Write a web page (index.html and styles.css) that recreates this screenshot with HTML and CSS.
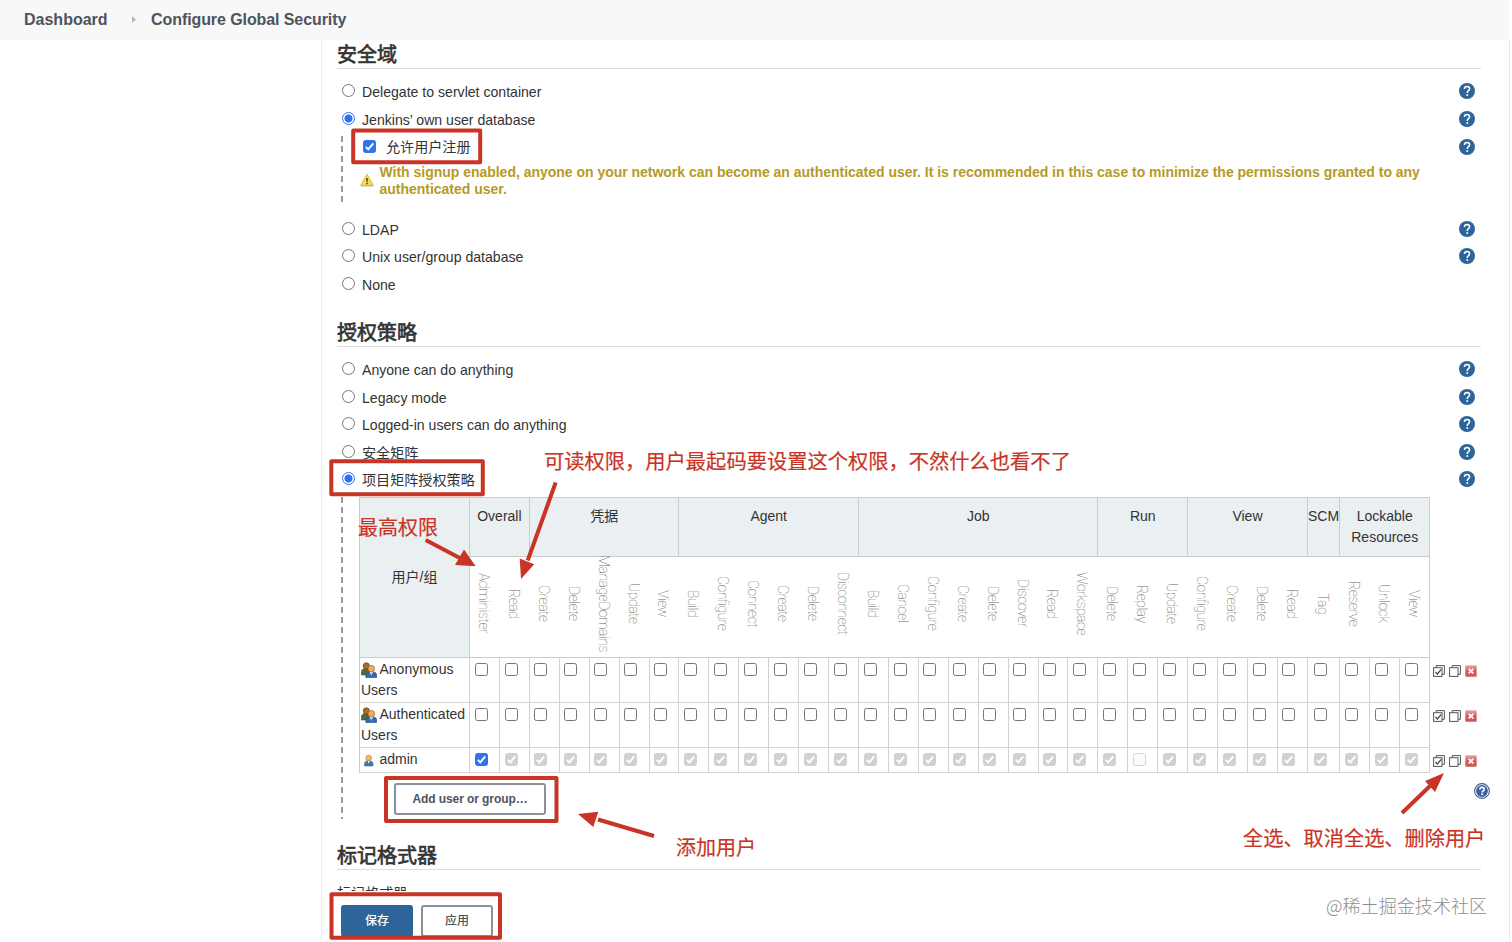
FILE: index.html
```html
<!DOCTYPE html>
<html lang="zh-CN">
<head>
<meta charset="utf-8">
<title>Configure Global Security</title>
<link rel="stylesheet" href="styles.css">
</head>
<body>
<svg class="defs" width="0" height="0" aria-hidden="true">
  <symbol id="help" viewBox="0 0 16 16">
    <circle cx="8" cy="8" r="8" fill="#2d659b"/>
    <path d="M5.400 6.100c0-1.700 1.100-2.700 2.600-2.700s2.600 1 2.600 2.400c0 1.900-2.400 1.900-2.400 4.100" fill="none" stroke="#fff" stroke-width="1.500"/>
    <rect x="7.400" y="11.200" width="1.700" height="1.700" fill="#fff"/>
  </symbol>
  <symbol id="help-ring" viewBox="0 0 16 16">
    <circle cx="8" cy="8" r="7.400" fill="#fff" stroke="#3c5a96" stroke-width="1.100"/>
    <circle cx="8" cy="8" r="5.900" fill="#3b5fa0"/>
    <path d="M5.900 6.400c0-1.400.9-2.100 2.100-2.100s2.200.7 2.200 1.900c0 1.600-2 1.600-2 3.200" fill="none" stroke="#fff" stroke-width="1.700"/>
    <rect x="7.300" y="10.400" width="1.800" height="1.700" fill="#fff"/>
  </symbol>
  <symbol id="tick" viewBox="0 0 13 13">
    <path d="M2.800 6.900l2.500 2.500 4.900-6" fill="none" stroke="#fff" stroke-width="1.900"/>
  </symbol>
  <symbol id="warn" viewBox="0 0 14 14">
    <path d="M7 1.200L13.300 12.400H.7z" fill="#f4dd52" stroke="#cdb52f" stroke-width=".9" stroke-linejoin="round"/>
    <path d="M1 13h12.400" stroke="#b9ad80" stroke-width=".8"/>
    <path d="M7 5v3.800M7 9.800v1.400" stroke="#4c4310" stroke-width="1.500"/>
  </symbol>
  <symbol id="people" viewBox="0 0 16 16">
    <path d="M.5 13V9.500c0-2 2-3 4.500-3s4 1 4 3V13z" fill="#55693a" stroke="#39492a" stroke-width=".6"/>
    <circle cx="5.300" cy="3.900" r="3.100" fill="#a76e2b" stroke="#654019" stroke-width=".7"/>
    <path d="M4.800 15.600v-2.800c0-2 2-3 5.400-3s5.400 1 5.400 3v2.800z" fill="#2f6bb4" stroke="#1d4479" stroke-width=".6"/>
    <path d="M8.600 9.900l1.700 3.600 1.800-3.600z" fill="#fff"/>
    <path d="M10.300 11v3" stroke="#8899b5" stroke-width=".8"/>
    <circle cx="10.300" cy="6.700" r="3.300" fill="#f0ae58" stroke="#a0601d" stroke-width=".7"/>
  </symbol>
  <symbol id="person" viewBox="0 0 16 16">
    <path d="M3.500 14v-2.300c0-2 1.700-3 4.200-3s4.300 1 4.300 3V14z" fill="#3a79b4" stroke="#28578a" stroke-width=".5"/>
    <path d="M6.500 8.700l1.200 2.800L9 8.700z" fill="#fff"/>
    <circle cx="7.700" cy="6" r="2.800" fill="#efb768" stroke="#b97b34" stroke-width=".6"/>
  </symbol>
  <symbol id="stack" viewBox="0 0 12 12">
    <path d="M3.200 2.700V.6h8.200v8.700H9" fill="none" stroke="#555" stroke-width="1"/>
    <rect x=".6" y="2.700" width="8.400" height="8.700" fill="#fff" stroke="#555" stroke-width="1"/>
  </symbol>
  <symbol id="stack-check" viewBox="0 0 12 12">
    <use href="#stack"/>
    <path d="M2.500 6.800l1.900 2.200 3.800-4.600" fill="none" stroke="#444" stroke-width="1.200"/>
  </symbol>
  <symbol id="remove" viewBox="0 0 12 12">
    <linearGradient id="remove-fill" x1="0" y1="0" x2="0" y2="1"><stop offset="0" stop-color="#eaa6a3"/><stop offset=".5" stop-color="#d35b59"/><stop offset="1" stop-color="#cf5557"/></linearGradient>
    <rect x=".3" y=".3" width="11.400" height="11.400" rx=".8" fill="url(#remove-fill)"/>
    <path d="M3.700 3.800l4.600 4.600M8.300 3.800L3.700 8.400" stroke="#fff" stroke-width="1.800"/>
  </symbol>
</svg>

<header class="breadcrumbs">
  <span>Dashboard</span>
  <svg class="crumb-arrow" viewBox="0 0 5 8"><path d="M0 0l5 4-5 4z" fill="#b2b2b2"/></svg>
  <span class="current">Configure Global Security</span>
</header>

<div class="page">
  <aside class="side"></aside>
  <main class="content">
    <h2 class="title">安全域</h2>
    <div class="options">
      <div class="option"><i class="radio"></i><span>Delegate to servlet container</span><svg class="help"><use href="#help"/></svg></div>
      <div class="option"><i class="radio on"></i><span>Jenkins’ own user database</span><svg class="help"><use href="#help"/></svg></div>
    </div>
    <div class="nested signup">
      <div class="signup-row"><i class="check on"><svg><use href="#tick"/></svg></i><span>允许用户注册</span><svg class="help"><use href="#help"/></svg></div>
      <div class="warning"><svg class="warn-icon"><use href="#warn"/></svg><p>With signup enabled, anyone on your network can become an authenticated user. It is recommended in this case to minimize the permissions granted to any<br>authenticated user.</p></div>
    </div>
    <div class="options after-signup">
      <div class="option"><i class="radio"></i><span>LDAP</span><svg class="help"><use href="#help"/></svg></div>
      <div class="option"><i class="radio"></i><span>Unix user/group database</span><svg class="help"><use href="#help"/></svg></div>
      <div class="option"><i class="radio"></i><span>None</span></div>
    </div>

    <h2 class="title title-auth">授权策略</h2>
    <div class="options strategies">
      <div class="option"><i class="radio"></i><span>Anyone can do anything</span><svg class="help"><use href="#help"/></svg></div>
      <div class="option"><i class="radio"></i><span>Legacy mode</span><svg class="help"><use href="#help"/></svg></div>
      <div class="option"><i class="radio"></i><span>Logged-in users can do anything</span><svg class="help"><use href="#help"/></svg></div>
      <div class="option"><i class="radio"></i><span>安全矩阵</span><svg class="help"><use href="#help"/></svg></div>
      <div class="option"><i class="radio on"></i><span>项目矩阵授权策略</span><svg class="help"><use href="#help"/></svg></div>
    </div>
    <div class="nested strategy">
      <div class="matrix" id="matrix"></div>
      <div class="add-row">
        <button class="button add">Add user or group…</button>
        <svg class="help ring"><use href="#help-ring"/></svg>
      </div>
    </div>

    <h2 class="title title-format">标记格式器</h2>
    <div class="format-label">标记格式器</div>
    <div class="bottom-bar">
      <button class="button primary">保存</button>
      <button class="button">应用</button>
    </div>
  </main>
</div>

<svg class="marks" width="1512" height="942" viewBox="0 0 1512 942">
  <g fill="none" stroke="#c93426" stroke-width="4" stroke-linejoin="round">
    <rect x="353.200" y="130.500" width="127" height="31.700"/>
    <rect x="331.300" y="461.200" width="151.500" height="33"/>
    <rect x="386" y="778" width="170.500" height="43"/>
    <rect x="331.500" y="894.300" width="168.500" height="43.400"/>
    <path d="M425.700 540l36 19M555.700 482.500l-28 78M654 836l-56-16.500M1402 813l28-27"/>
  </g>
  <g fill="#c93426">
    <path d="M475.700 566.300L455 565l9-15.500z"/>
    <path d="M521 579l-1.300-20.500 14.500 5.700z"/>
    <path d="M578 814l20.300-2.300-5 15.200z"/>
    <path d="M1444 773l-19 8 10 11z"/>
  </g>
</svg>
<div class="note note-read">可读权限，用户最起码要设置这个权限，不然什么也看不了</div>
<div class="note note-admin">最高权限</div>
<div class="note note-add">添加用户</div>
<div class="note note-actions">全选、取消全选、删除用户</div>
<div class="watermark">@稀土掘金技术社区</div>
<script src="matrix.js"></script>
</body>
</html>
```

FILE: styles.css
```css
* { box-sizing: border-box; }
body {
  margin: 0;
  width: 1512px;
  height: 942px;
  overflow: hidden;
  position: relative;
  background: #fff;
  color: #333;
  font: 14.1px/20px "Liberation Sans", "Noto Sans CJK SC", sans-serif;
}
.defs { position: absolute; }
.breadcrumbs {
  display: flex;
  align-items: center;
  height: 40px;
  width: 1509px;
  padding: 0 24px;
  background: #f8f8f8;
  color: #4d545d;
  font-size: 16px;
  font-weight: bold;
}
.current { letter-spacing: -.09px; }
.crumb-arrow { width: 4px; height: 7px; margin: 0 15px 2px 24.500px; }
.page { display: flex; height: 902px; width: 1510px; border-right: 1px solid #e8e8e8; }
.side { width: 321px; flex: none; }
.content {
  flex: 1;
  border-left: 1px solid #efefef;
  padding: 0 28px 0 15px;
  display: flex;
  flex-direction: column;
}
.title {
  flex: none;
  margin: 0 4px 0 0;
  height: 29px;
  padding-bottom: 1px;
  border-bottom: 1px solid #dcdcdc;
  font: 400 20px/27px "Noto Sans CJK SC", sans-serif;
  -webkit-text-stroke: .65px #333;
}
.title-auth { margin-top: 20px; }
.title-format { margin-top: 22px; }
.options { padding: 8.500px 10px 0 5px; }
.strategies { padding-top: 9px; }
.option { display: flex; align-items: center; height: 27.500px; }
.option span { margin-left: 7px; padding-top: 2px; }
.radio {
  width: 13px; height: 13px; flex: none;
  border: 1px solid #767676; border-radius: 50%;
  margin-top: -1px;
}
.radio.on { border-color: #2f73ef; background: radial-gradient(circle, #2f73ef 0 3.800px, #fff 4.300px); }
.help { width: 16px; height: 16px; margin-left: auto; flex: none; }
.check {
  display: block; flex: none;
  width: 13px; height: 13px;
  border: 1px solid #767676; border-radius: 2.500px;
}
.check svg { display: block; width: 13px; height: 13px; margin: -1px; }
.check.on { background: #2f73ef; border-color: #2f73ef; }
.check.locked { background: #d1d1d1; border-color: #d1d1d1; }
.check.blank { background: #fafafa; border-color: #d6d6d6; }
.nested {
  margin-left: 4px;
  background: repeating-linear-gradient(to bottom, #999 0 6px, transparent 6px 10px) left top / 2px 100% no-repeat;
}
.signup { height: 67px; margin-top: 3.500px; }
.signup-row { display: flex; align-items: center; height: 21px; padding: 0 10px 0 22px; }
.signup-row span { margin-left: 10px; }
.warning {
  display: flex;
  padding: 7px 0 0 19px;
  color: #b59a27;
  font-size: 14px;
  font-weight: bold;
  line-height: 17px;
  letter-spacing: -.018px;
}
.warning p { margin: 0 0 0 5.500px; white-space: nowrap; }
.warn-icon { width: 14px; height: 14px; margin-top: 9px; }
.after-signup { padding-top: 12px; }
.strategy { height: 322px; margin-top: 3.500px; padding-left: 18px; }

.matrix {
  display: grid;
  grid-template-columns: 110px repeat(28, 29.930px) 32.500px repeat(3, 29.930px) 56px;
  grid-template-rows: 60px 101px 45px 45px 25px;
  width: 1126px;
  border-left: 1px solid #ccc;
  line-height: 21px;
  font-size: 14px;
}
.corner, .group { background: #eaeff2; border: solid #ccc; border-width: 1px 1px 1px 0; text-align: center; }
.corner { grid-row: span 2; display: flex; align-items: center; justify-content: center; }
.group { padding-top: 8px; }
.blank-head { grid-row: span 2; }
.perm {
  display: flex; align-items: center; justify-content: center;
  border-bottom: 1px solid #ccc;
  font: 100 14px/20px Roboto, "Liberation Sans", sans-serif;
  color: #666;
  overflow: visible;
}
.perm span { writing-mode: vertical-rl; letter-spacing: -.5px; margin: -6px 2px 0 0; }
.perm.last { border-right: 1px solid #ccc; }
.who, .cell { border: solid #d3d3cc; border-width: 0 1px 1px 0; }
.who { padding: 1px 0 0 1px; white-space: nowrap; }
.who svg { width: 16px; height: 16px; vertical-align: -4px; margin-right: 2.500px; }
.cell { padding: 5px 0 0 4.600px; }
.cell.wide { padding-left: 6.500px; }
.actions { display: flex; gap: 4px; padding: 7.500px 0 0 3px; }
.actions svg { width: 12px; height: 12px; }

.add-row { display: flex; padding: 10.500px 0 0 35px; }
.button {
  height: 32px; width: 72px; padding: 0;
  border: 2px solid #8b919b; border-radius: 3px;
  background: #fff; color: #4d545d;
  font: bold 12px/18px "Liberation Sans", "Noto Sans CJK SC", sans-serif;
}
.button.add { width: 152px; letter-spacing: -.08px; }
.button.primary { background: #2d659b; border-color: #2d659b; color: #fff; }
.ring { margin: 0 -5px 0 auto; }
.format-label { height: 21px; padding-top: 13px; overflow: hidden; flex: none; }
.bottom-bar { display: flex; gap: 8px; padding: 14px 0 0 4px; background: #fff; flex: 1; }
.bottom-bar .button { font-weight: 500; }

.marks { position: absolute; left: 0; top: 0; }
.note {
  position: absolute;
  color: #c93426;
  font: 400 20.200px/28px "Noto Sans CJK SC", sans-serif;
  -webkit-text-stroke: .2px #c93426;
  white-space: nowrap;
}
.note-read { left: 544px; top: 446px; font-size: 20.270px; }
.note-admin { left: 358px; top: 513px; font-size: 20px; }
.note-add { left: 676px; top: 833px; font-size: 20px; }
.note-actions { left: 1243px; top: 824px; }
.watermark {
  position: absolute; left: 1326px; top: 891px;
  font: 300 18.100px/28px "Noto Sans CJK SC", sans-serif;
  color: #8e8e8e;
  white-space: nowrap;
}
```

FILE: matrix.js
```js
const groups = [
  ['Overall', ['Administer', 'Read']],
  ['凭据', ['Create', 'Delete', 'ManageDomains', 'Update', 'View']],
  ['Agent', ['Build', 'Configure', 'Connect', 'Create', 'Delete', 'Disconnect']],
  ['Job', ['Build', 'Cancel', 'Configure', 'Create', 'Delete', 'Discover', 'Read', 'Workspace']],
  ['Run', ['Delete', 'Replay', 'Update']],
  ['View', ['Configure', 'Create', 'Delete', 'Read']],
  ['SCM', ['Tag']],
  ['Lockable<br>Resources', ['Reserve', 'Unlock', 'View']]
];
const users = [
  ['people', 'Anonymous<br>Users'],
  ['people', 'Authenticated<br>Users'],
  ['person', 'admin']
];
const icon = (id) => `<svg><use href="#${id}"/></svg>`;
const perms = groups.flatMap(([, names]) => names);

let html = '<div class="corner">用户/组</div>';
for (const [name, names] of groups) {
  html += `<div class="group" style="grid-column: span ${names.length}">${name}</div>`;
}
html += '<div class="blank-head"></div>';
perms.forEach((name, i) => {
  html += `<div class="perm${i === perms.length - 1 ? ' last' : ''}"><span>${name}</span></div>`;
});
for (const [kind, label] of users) {
  html += `<div class="who">${icon(kind)}${label}</div>`;
  for (const name of perms) {
    let state = '';
    if (kind === 'person') {
      state = name === 'Administer' ? ' on' : name === 'Replay' ? ' blank' : ' locked';
    }
    const tick = state === ' on' || state === ' locked' ? icon('tick') : '';
    html += `<div class="cell${name === 'Tag' ? ' wide' : ''}"><i class="check${state}">${tick}</i></div>`;
  }
  html += `<div class="actions">${icon('stack-check')}${icon('stack')}${icon('remove')}</div>`;
}
document.getElementById('matrix').innerHTML = html;
```
